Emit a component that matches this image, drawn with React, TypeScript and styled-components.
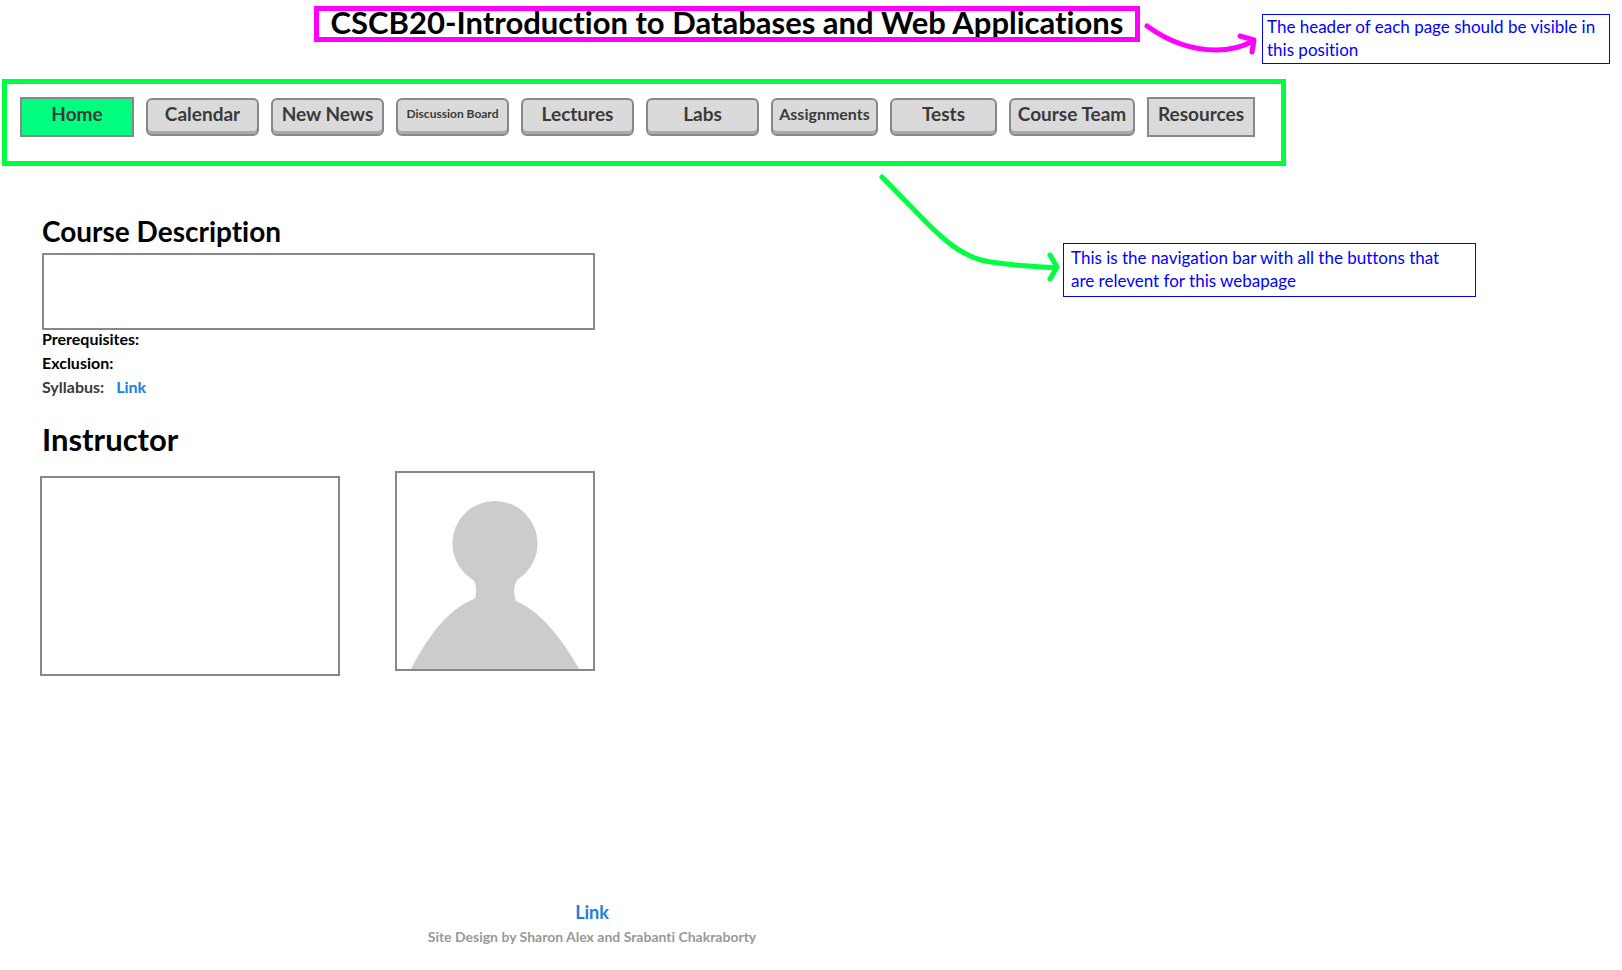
import React from "react";
import styled, { createGlobalStyle, css } from "styled-components";

const GlobalStyle = createGlobalStyle`
  *, *::before, *::after { box-sizing: border-box; }
  body {
    margin: 0;
    background: #fff;
    color: #000;
    font-family: Lato, "Noto Sans", sans-serif;
    font-variant-ligatures: none;
  }
  h1, h2, p { margin: 0; }
`;

const TopRow = styled.header`
  display: flex;
  align-items: flex-start;
  padding: 6px 12px 0 0;
`;

const TitleFrame = styled.div`
  position: relative;
  flex: 0 0 826px;
  margin-left: auto;
  padding: 6px 5px 10px;
  text-align: center;

  &::after {
    content: "";
    position: absolute;
    inset: 0;
    border: 5px solid #ff00ff;
  }
`;

const PageTitle = styled.h1`
  font-size: 31px;
  line-height: 20px;
  font-weight: 700;
  white-space: nowrap;
`;

const Arrow = styled.svg`
  display: block;
  flex: none;
  fill: none;
  stroke-width: 5;
  stroke-linecap: round;
  stroke-linejoin: round;
`;

const Note = styled.p<{ $width: number; $roomy?: boolean }>`
  flex: none;
  width: ${(p) => p.$width}px;
  padding: ${(p) => (p.$roomy ? "2px 16px 4px 7px" : "0 4px 2px")};
  border: 1px solid #0000ff;
  color: #0000ff;
  font-size: 17px;
  line-height: 23px;
`;

const HeaderNote = styled(Note)`
  margin-top: 8px;
`;

const NavBar = styled.nav`
  display: flex;
  align-items: center;
  gap: 12px;
  max-width: 1284px;
  margin: 15px 2px 0;
  padding: 13px 13px 24px;
  border: 5px solid #00ff40;
`;

type Size = "small" | "medium" | "large";
const textSize: Record<Size, string> = { small: "12px", medium: "16px", large: "19px" };

const NavButton = styled.button<{ $width: number; $size: Size; $square?: boolean; $active?: boolean }>`
  flex: 0 1 ${(p) => p.$width}px;
  height: 38px;
  padding: 0 0 6px;
  border: 2px solid #888;
  border-radius: 6px;
  background: #dadada;
  box-shadow: inset 0 -3px 0 #aaa;
  color: #3a3a3a;
  font-family: inherit;
  font-weight: 700;
  font-size: ${(p) => textSize[p.$size]};
  line-height: 22px;
  white-space: nowrap;
  cursor: pointer;

  ${(p) =>
    p.$square &&
    css`
      height: 40px;
      border-radius: 0;
      box-shadow: none;
    `}
  ${(p) =>
    p.$active &&
    css`
      background: #00ff80;
    `}
`;

const Body = styled.div`
  display: flex;
  align-items: flex-start;
`;

const Content = styled.main`
  flex: none;
  width: 555px;
  margin: 47px 0 0 40px;
`;

const Annotation = styled.aside`
  display: flex;
  align-items: flex-start;
  margin: 5px 146px 0 auto;
`;

const NavNote = styled(Note)`
  margin-top: 72px;
`;

const Section = styled.section`
  padding-left: 2px;
`;

const Heading = styled.h2<{ $large?: boolean }>`
  font-size: ${(p) => (p.$large ? "31px" : "28px")};
  line-height: ${(p) => (p.$large ? "38px" : "36px")};
  font-weight: 700;
`;

const Frame = styled.div`
  border: 2px solid #888;
`;

const DescriptionFrame = styled(Frame)`
  height: 77px;
  margin-top: 4px;
`;

const Facts = styled.div`
  display: flex;
  flex-direction: column;
  gap: 6px;
  margin-bottom: 24px;
`;

const Fact = styled.p<{ $muted?: boolean }>`
  display: flex;
  gap: 12px;
  font-size: 16px;
  line-height: 18px;
  font-weight: 700;
  color: ${(p) => (p.$muted ? "#3a3a3a" : "#000")};
`;

const TextLink = styled.a`
  color: #1b81dc;
  font-weight: 700;
  text-decoration: none;
`;

const InstructorRow = styled.div`
  display: flex;
  justify-content: space-between;
  height: 205px;
  margin-top: 13px;
`;

const BioFrame = styled(Frame)`
  width: 300px;
  height: 200px;
  align-self: flex-end;
`;

const PhotoFrame = styled(Frame)`
  width: 200px;
  height: 200px;

  svg { display: block; width: 100%; height: 100%; }
`;

const Footer = styled.footer`
  display: flex;
  flex-direction: column;
  align-items: center;
  gap: 3px;
  max-width: 1184px;
  margin-top: 224px;
  font-size: 18px;
  line-height: 24px;
`;

const Credit = styled.p`
  color: #999;
  font-size: 14px;
  line-height: 20px;
  font-weight: 700;
`;

interface NavItem {
  label: string;
  width: number;
  size?: Size;
  square?: boolean;
  active?: boolean;
}

const navItems: NavItem[] = [
  { label: "Home", width: 114, square: true, active: true },
  { label: "Calendar", width: 113 },
  { label: "New News", width: 113 },
  { label: "Discussion Board", width: 113, size: "small" },
  { label: "Lectures", width: 113 },
  { label: "Labs", width: 113 },
  { label: "Assignments", width: 107, size: "medium" },
  { label: "Tests", width: 107 },
  { label: "Course Team", width: 126 },
  { label: "Resources", width: 108, square: true },
];

export default function App() {
  return (
    <>
      <GlobalStyle />
      <TopRow>
        <TitleFrame>
          <PageTitle>CSCB20-Introduction to Databases and Web Applications</PageTitle>
        </TitleFrame>
        <Arrow width="122" height="58" viewBox="0 0 122 58" stroke="#ff00ff" aria-hidden="true">
          <path d="M7 20C25 33 48 44 76 44C92 44 104 40 113 35" />
          <path d="M100 30L114 34L112 46" />
        </Arrow>
        <HeaderNote $width={348}>The header of each page should be visible in this position</HeaderNote>
      </TopRow>

      <NavBar>
        {navItems.map((item) => (
          <NavButton
            key={item.label}
            type="button"
            $width={item.width}
            $size={item.size ?? "large"}
            $square={item.square}
            $active={item.active}
          >
            {item.label}
          </NavButton>
        ))}
      </NavBar>

      <Body>
        <Content>
          <Section>
            <Heading>Course Description</Heading>
            <DescriptionFrame />
            <Facts>
              <Fact>Prerequisites:</Fact>
              <Fact>Exclusion:</Fact>
              <Fact $muted>
                Syllabus: <TextLink href="#syllabus">Link</TextLink>
              </Fact>
            </Facts>
            <Heading $large>Instructor</Heading>
          </Section>
          <InstructorRow>
            <BioFrame />
            <PhotoFrame>
              <svg viewBox="0 0 196 196" fill="#ccc" role="img" aria-label="Instructor photo">
                <circle cx="98" cy="70.5" r="42.6" />
                <path d="M76.500 106.500C79.500 112 80 119 78 125.500C51 136 32 162 14 196H182C163 162 142 138 119 128C116.500 121 116 112 121 106Z" />
              </svg>
            </PhotoFrame>
          </InstructorRow>
        </Content>
        <Annotation>
          <Arrow width="185" height="120" viewBox="0 0 185 120" stroke="#00ff40" aria-hidden="true">
            <path d="M4 6L49 52C66 69 82 83 103 89C124 94 150 95 178 97" />
            <path d="M172 84L179 96L172 108" />
          </Arrow>
          <NavNote $width={413} $roomy>
            This is the navigation bar with all the buttons that are relevent for this webapage
          </NavNote>
        </Annotation>
      </Body>

      <Footer>
        <TextLink href="#contact">Link</TextLink>
        <Credit>Site Design by Sharon Alex and Srabanti Chakraborty</Credit>
      </Footer>
    </>
  );
}
